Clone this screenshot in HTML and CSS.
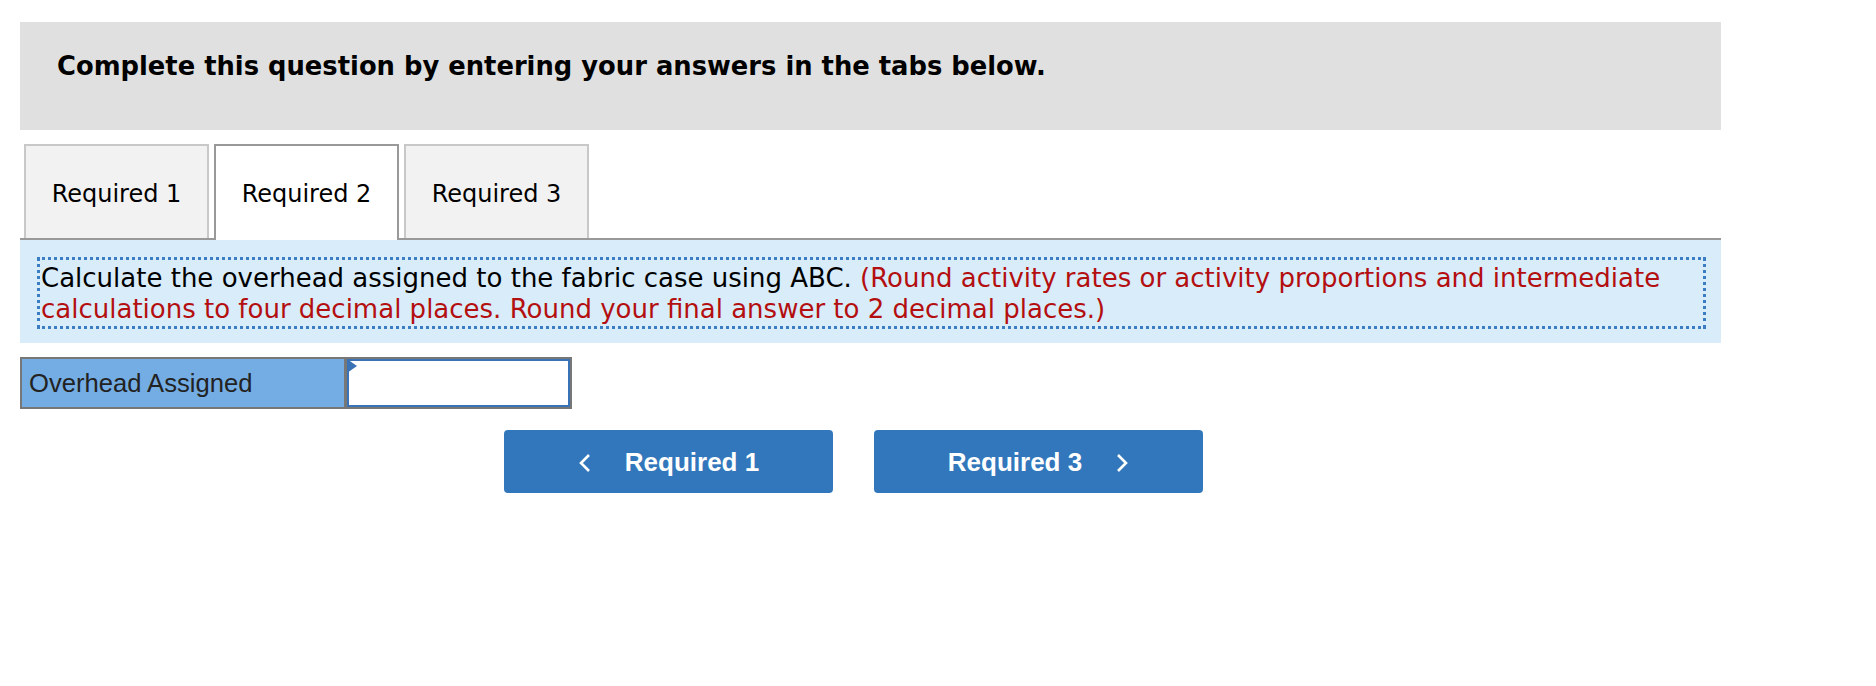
FILE: index.html
```html
<!DOCTYPE html>
<html lang="en">
<head>
<meta charset="utf-8">
<title>Required 2</title>
<link rel="stylesheet" href="styles.css">
</head>
<body>
<div class="page">
  <div class="header">
    <p class="header-text">Complete this question by entering your answers in the tabs below.</p>
  </div>

  <div class="tabs">
    <div class="tab">Required 1</div>
    <div class="tab tab-active">Required 2</div>
    <div class="tab">Required 3</div>
  </div>

  <div class="panel">
    <div class="instr">Calculate the overhead assigned to the fabric case using ABC. <span class="note">(Round activity rates or activity proportions and intermediate calculations to four decimal places. Round your final answer to 2 decimal places.)</span></div>
  </div>

  <div class="answer-row">
    <div class="answer-label">Overhead Assigned</div>
    <div class="answer-cell">
      <div class="answer-input"></div>
      <span class="marker"></span>
    </div>
  </div>

  <div class="nav">
    <button class="nav-btn">
      <svg class="chev" width="14" height="20" viewBox="0 0 14 20"><polyline points="11,2 3,10 11,18" fill="none" stroke="#fff" stroke-width="2.6"/></svg>
      <span>Required 1</span>
    </button>
    <button class="nav-btn">
      <span>Required 3</span>
      <svg class="chev" width="14" height="20" viewBox="0 0 14 20"><polyline points="3,2 11,10 3,18" fill="none" stroke="#fff" stroke-width="2.6"/></svg>
    </button>
  </div>
</div>
</body>
</html>
```

FILE: styles.css
```css
html, body {
  margin: 0;
  padding: 0;
  background: #fff;
}

.page {
  width: 1701px;
  margin: 22px 0 0 20px;
  font-family: "DejaVu Sans", Verdana, sans-serif;
  color: #000;
}

.header {
  height: 108px;
  box-sizing: border-box;
  background: #e0e0e0;
  padding: 29px 0 0 37px;
}

.header-text {
  margin: 0;
  font-size: 25.8px;
  line-height: 30px;
  font-weight: bold;
}

.tabs {
  margin-top: 14px;
  display: flex;
  align-items: flex-end;
  gap: 5px;
  padding-left: 4px;
  border-bottom: 2px solid #999;
}

.tab {
  width: 185px;
  height: 94px;
  box-sizing: border-box;
  border: 2px solid #c8c8c8;
  border-bottom: none;
  background: #f2f2f2;
  display: flex;
  align-items: center;
  justify-content: center;
  padding-top: 4px;
  font-size: 24px;
}

.tab-active {
  height: 96px;
  margin-bottom: -2px;
  padding-top: 2px;
  background: #fff;
  border-color: #999;
}

.panel {
  background: #d9ecf9;
  padding: 17px 15px 14px 17px;
}

.instr {
  border: 3px dotted #3b7dc3;
  padding: 3px 1px 1px 1px;
  font-size: 26px;
  line-height: 31px;
}

.note {
  color: #b40f10;
}

.answer-row {
  margin-top: 14px;
  display: flex;
  width: 552px;
  height: 52px;
  box-sizing: border-box;
  border: 2px solid #777;
}

.answer-label {
  width: 325px;
  box-sizing: border-box;
  background: #74ade3;
  border-right: 3px solid #777;
  padding-left: 7px;
  display: flex;
  align-items: center;
  font-family: "Liberation Sans", Arial, sans-serif;
  font-size: 25.6px;
  color: #222;
}

.answer-cell {
  position: relative;
  flex: 1;
  display: flex;
}

.answer-input {
  flex: 1;
  border: 2px solid #3a73b5;
  background: #fff;
}

.marker {
  position: absolute;
  left: 0;
  top: 0;
  width: 0;
  height: 0;
  border-top: 7.5px solid transparent;
  border-bottom: 7.5px solid transparent;
  border-left: 10px solid #3a73b5;
}

.nav {
  margin-top: 21px;
  padding-left: 484px;
  display: flex;
  gap: 41px;
}

.nav-btn {
  width: 329px;
  height: 63px;
  border: none;
  border-radius: 4px;
  background: #3277bb;
  color: #fff;
  font-family: "Liberation Sans", Arial, sans-serif;
  font-weight: bold;
  font-size: 26px;
  display: flex;
  align-items: center;
  justify-content: center;
  gap: 33px;
  padding: 2px 0 0 0;
}

.chev {
  display: block;
}
```
